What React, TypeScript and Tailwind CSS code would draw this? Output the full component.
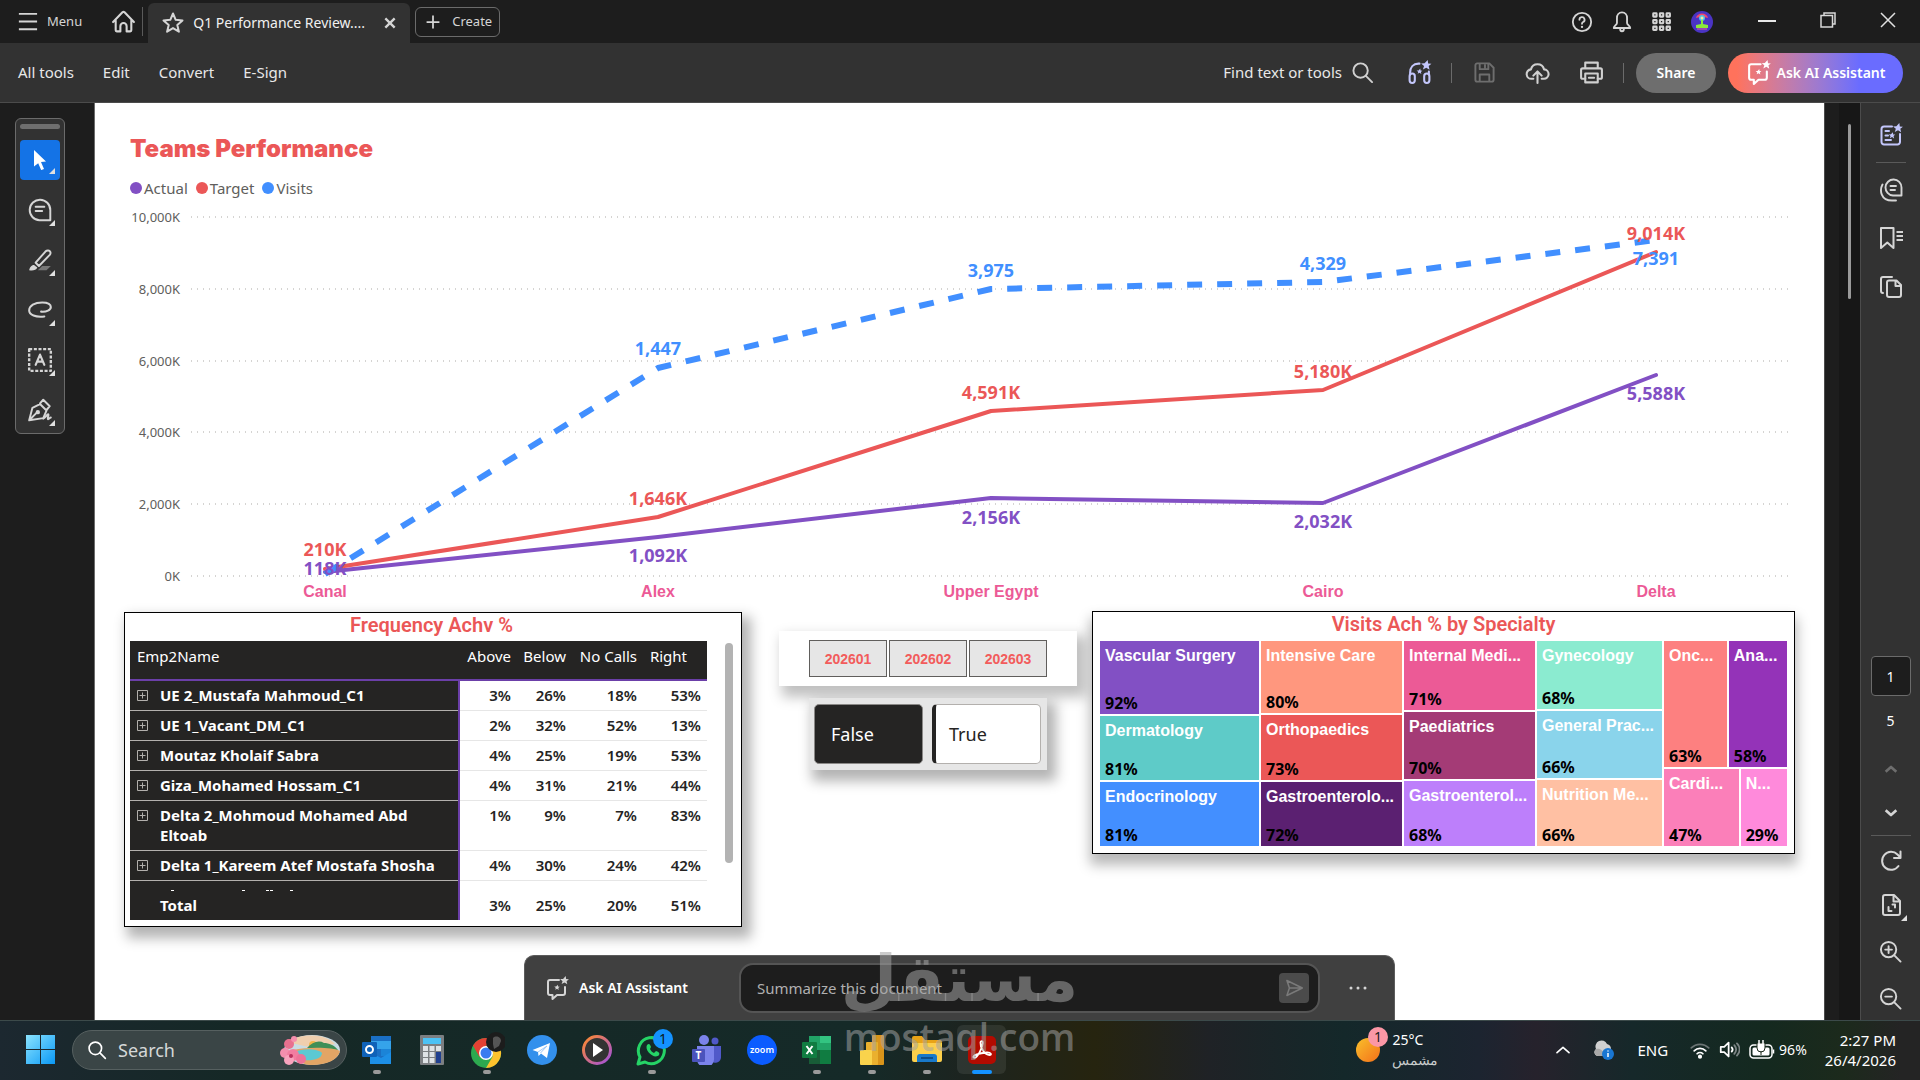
import React, {useState} from "react";

const toolbarLinks = ["All tools", "Edit", "Convert", "E-Sign"];

const regions = ["Canal", "Alex", "Upper Egypt", "Cairo", "Delta"];

const series = [
    {
        name: "Visits", color: "#418fff", width: 6, dash: "15 15",
        points: [374, 168, 89, 82, 40],
        labels: [null, "1,447", "3,975", "4,329", "7,391"],
        labelY: [0, 155, 77, 70, 65],
    },
    {
        name: "Target", color: "#eb5757", width: 4, dash: undefined,
        points: [369, 317, 211, 190, 52],
        labels: ["210K", "1,646K", "4,591K", "5,180K", "9,014K"],
        labelY: [356, 305, 199, 178, 40],
    },
    {
        name: "Actual", color: "#8250c4", width: 4, dash: undefined,
        points: [372, 337, 298, 303, 175],
        labels: ["118K", "1,092K", "2,156K", "2,032K", "5,588K"],
        labelY: [375, 362, 324, 328, 200],
    },
];

const employees = [
    {name: "UE 2_Mustafa Mahmoud_C1", values: ["3%", "26%", "18%", "53%"]},
    {name: "UE 1_Vacant_DM_C1", values: ["2%", "32%", "52%", "13%"]},
    {name: "Moutaz Kholaif Sabra", values: ["4%", "25%", "19%", "53%"]},
    {name: "Giza_Mohamed Hossam_C1", values: ["4%", "31%", "21%", "44%"]},
    {name: "Delta 2_Mohmoud Mohamed Abd Eltoab", values: ["1%", "9%", "7%", "83%"]},
    {name: "Delta 1_Kareem Atef Mostafa Shosha", values: ["4%", "30%", "24%", "42%"]},
];

const treemap = [
    {
        weight: 159, tiles: [
            {name: "Vascular Surgery", value: "92%", weight: 73, color: "bg-[#8250c4]"},
            {name: "Dermatology", value: "81%", weight: 64, color: "bg-[#5ecbc8]"},
            {name: "Endocrinology", value: "81%", weight: 64, color: "bg-[#438fff]"},
        ]
    },
    {
        weight: 141, tiles: [
            {name: "Intensive Care", value: "80%", weight: 72, color: "bg-[#ff977e]"},
            {name: "Orthopaedics", value: "73%", weight: 65, color: "bg-[#eb5757]"},
            {name: "Gastroenterolo...", value: "72%", weight: 64, color: "bg-[#5b2071]"},
        ]
    },
    {
        weight: 131, tiles: [
            {name: "Internal Medi...", value: "71%", weight: 69, color: "bg-[#ec5a96]"},
            {name: "Paediatrics", value: "70%", weight: 67, color: "bg-[#a43b76]"},
            {name: "Gastroenterol...", value: "68%", weight: 65, color: "bg-[#bd7ffb]"},
        ]
    },
    {
        weight: 125, tiles: [
            {name: "Gynecology", value: "68%", weight: 68, color: "bg-[#8bebd0]"},
            {name: "General Prac...", value: "66%", weight: 67, color: "bg-[#8ad4eb]"},
            {name: "Nutrition Me...", value: "66%", weight: 66, color: "bg-[#ffc0a3]"},
        ]
    },
];

const treemapEdge = [
    {
        weight: 126, tiles: [
            {name: "Onc...", value: "63%", weight: 63, color: "bg-[#fd8080]"},
            {name: "Ana...", value: "58%", weight: 58, color: "bg-[#9433b8]"},
        ]
    },
    {
        weight: 77, tiles: [
            {name: "Cardi...", value: "47%", weight: 76, color: "bg-[#fb7fb9]"},
            {name: "N...", value: "29%", weight: 45, color: "bg-[#ff8adb]"},
        ]
    },
];

const Icon = ({size = 24, className = "", children}) => (
    <svg width={size} height={size} viewBox="0 0 24 24" fill="none" stroke="currentColor" strokeWidth="2"
         strokeLinecap="round" strokeLinejoin="round" className={"shrink-0 " + className} aria-hidden="true">
        {children}
    </svg>
);

const Sparkle = ({x, y, s}) => (
    <path transform={`translate(${x} ${y}) scale(${s})`} stroke="none" fill="currentColor"
          d="M1.500 -5.500L2 -1.800L5.500 -1.500L2.600 0.800L3.500 4.800L0 2.600L-3.600 4.500L-2.400 0.800L-5.500 -1.800L-1.800 -2Z"/>
);

const AssistantIcon = ({size = 24}) => (
    <Icon size={size}>
        <path d="M14 4H5a2 2 0 0 0-2 2v11a2 2 0 0 0 2 2h2.500v4l4.500-4h6a2 2 0 0 0 2-2v-6"/>
        <Sparkle x={19.5} y={4.500} s={0.8}/>
        <Sparkle x={12} y={11.500} s={0.5}/>
    </Icon>
);

const SearchIcon = ({size = 24}) => (
    <Icon size={size}>
        <circle cx="10" cy="10" r="7.500"/>
        <path d="M15.500 15.500L22 22"/>
    </Icon>
);

const TitleBar = () => (
    <header className="flex h-[43px] items-center bg-[#1d1d1d] text-[#d5d5d5]">
        <button className="ml-[16px] flex items-center gap-2 text-[13px]">
            <Icon size={23}><path strokeLinecap="butt" d="M3 4h19M3 12h19M3 20h19"/></Icon>
            Menu
        </button>
        <button aria-label="Home" className="ml-[29px]">
            <Icon size={25}>
                <path d="M2 12.500L11 3.200a1.500 1.500 0 0 1 2 0L22 12.500M4.500 11v9.500a1 1 0 0 0 1 1H9v-5a3 3 0 0 1 6 0v5h3.500a1 1 0 0 0 1-1V11"/>
            </Icon>
        </button>
        <div className="ml-[6px] h-[29px] w-px bg-[#5a5a5a]"/>
        <div className="ml-[5px] mt-[3px] flex h-10 w-[262px] items-center rounded-t-md bg-[#323232] pl-[13px] pr-[13px]">
            <Icon size={24}>
                <path strokeWidth="2" d="M12 2.500l2.700 6.300 6.800.6-5.200 4.500 1.600 6.800L12 17.100l-5.900 3.600 1.600-6.800L2.500 9.400l6.800-.6z"/>
            </Icon>
            <span className="ml-2 flex-1 whitespace-nowrap text-sm text-[#f0f0f0]">Q1 Performance Review....</span>
            <button aria-label="Close tab">
                <Icon size={14}><path strokeWidth="4" strokeLinecap="butt" d="M4 4l16 16M20 4L4 20"/></Icon>
            </button>
        </div>
        <button className="ml-[5px] flex h-[30px] w-[85px] items-center gap-3 rounded-md border border-[#6b6b6b] px-[10px] text-[13px]">
            <Icon size={14}><path strokeWidth="3" strokeLinecap="butt" d="M12 1v22M1 12h22"/></Icon>
            Create
        </button>
        <div className="ml-auto flex items-center pr-6">
            <button aria-label="Help" className="mr-[18px]">
                <Icon size={22}>
                    <circle cx="12" cy="12" r="10"/>
                    <path d="M9.200 9.500a2.800 2.800 0 1 1 4 2.500c-1 .5-1.200 1-1.200 2"/>
                    <path strokeWidth="2.500" d="M12 17.300v.1"/>
                </Icon>
            </button>
            <button aria-label="Notifications" className="mr-[19px]">
                <Icon size={22}>
                    <path d="M12 1.500c-3.500 0-5.500 2.700-5.500 6v5.500c0 2-3.500 3.500-3.500 5.500h18c0-2-3.500-3.500-3.500-5.500V7.500c0-3.300-2-6-5.500-6z"/>
                    <path d="M10 19.500c0 3.500 4 3.500 4 0"/>
                </Icon>
            </button>
            <button aria-label="Apps" className="mr-[19px]">
                <Icon size={20}>
                    {[1.5, 9.5, 17.5].map(x => [1.5, 9.5, 17.5].map(y => (
                        <rect key={x + "-" + y} x={x} y={y} width="4" height="4" rx="0.500" strokeWidth="2.500"/>
                    )))}
                </Icon>
            </button>
            <button aria-label="Account" className="mr-[45px]">
                <svg width="22" height="22" viewBox="0 0 22 22">
                    <circle cx="11" cy="11" r="11" fill="#4b34c4"/>
                    <path d="M5 7c1-6 11-6 12 0l-4-1h-4z" fill="#f2496b"/>
                    <circle cx="11" cy="7" r="3" fill="#4fc3e8"/>
                    <circle cx="11" cy="7" r="1.500" fill="#f5e9a0"/>
                    <path d="M10 9h2v4l5 1v3H5v-3l5-1z" fill="#8bea3a"/>
                    <path d="M6 18h10" stroke="#e85aa0"/>
                </svg>
            </button>
            <button aria-label="Minimize" className="mr-[44px]">
                <svg width="18" height="18" viewBox="0 0 18 18"><path d="M0 8h18" stroke="#e8e8e8" strokeWidth="2"/></svg>
            </button>
            <button aria-label="Restore" className="mb-1 mr-[44px]">
                <svg width="16" height="16" viewBox="0 0 16 16" fill="none" stroke="#d8d8d8" strokeWidth="1.500">
                    <path d="M4 3V1h11v11h-2M1 3.500h11.500V15H1z"/>
                </svg>
            </button>
            <button aria-label="Close" className="mb-1">
                <svg width="16" height="16" viewBox="0 0 16 16" stroke="#e0e0e0" strokeWidth="1.500">
                    <path d="M1 1l14 14M15 1L1 15"/>
                </svg>
            </button>
        </div>
    </header>
);

const Toolbar = () => (
    <nav className="flex h-[60px] items-center border-b border-[#4b4b4b] bg-[#323232] px-[18px] text-sm text-[#e8e8e8]">
        <div className="flex gap-[29px] text-[15px]">
            {toolbarLinks.map(link => <a key={link} href="#">{link}</a>)}
        </div>
        <div className="ml-auto flex items-center text-[#d0d0d0]">
            <button className="flex items-center gap-[9px] whitespace-nowrap">
                <span className="text-[15px] text-[#e8e8e8]">Find text or tools</span>
                <SearchIcon size={23}/>
            </button>
            <button aria-label="Listen" className="ml-[33px] text-[#c3c6fb]">
                <Icon size={25}>
                    <path d="M3 13v-1c0-5 3-8.500 8-8.500h1M21 13v-2"/>
                    <rect x="2.500" y="13" width="5" height="9" rx="2.500"/>
                    <rect x="16.500" y="13" width="5" height="9" rx="2.500"/>
                    <Sparkle x={18.5} y={5} s={0.9}/>
                    <Sparkle x={12} y={11} s={0.5}/>
                </Icon>
            </button>
            <div className="ml-[19px] h-5 w-px bg-[#6b6b6b]"/>
            <button aria-label="Save" className="ml-[21px] text-[#6e6e6e]">
                <Icon size={23}>
                    <path d="M4 2.500h13l4.500 4.500v12.500a2 2 0 0 1-2 2H4.500a2 2 0 0 1-2-2v-15a2 2 0 0 1 2-2z"/>
                    <path d="M7 3v5.500h9V3M7 21v-7h10v7M12.500 4v3"/>
                </Icon>
            </button>
            <button aria-label="Upload" className="ml-[29px]">
                <Icon size={25}>
                    <path d="M8 18H6.500a4.500 4.500 0 0 1-.8-9A6.500 6.500 0 0 1 18.300 9a4.500 4.500 0 0 1-.3 9H16M12 22V11.500M8 15l4-4 4 4"/>
                </Icon>
            </button>
            <button aria-label="Print" className="ml-[29px]">
                <Icon size={25}>
                    <path d="M6 8V2.500h12V8M6 18H3.500a1.500 1.500 0 0 1-1.500-1.500v-7A1.500 1.500 0 0 1 3.500 8h17A1.500 1.500 0 0 1 22 9.500v7a1.500 1.500 0 0 1-1.500 1.500H18"/>
                    <path d="M6 13h12v8.500H6zM9.500 17h5"/>
                </Icon>
            </button>
            <div className="ml-[19px] h-5 w-px bg-[#6b6b6b]"/>
            <button className="ml-[12px] h-10 w-20 rounded-full bg-[#6e6e6e] font-semibold text-white">Share</button>
            <button className="ml-3 -mr-px flex h-10 w-[175px] items-center justify-center gap-[6px] whitespace-nowrap rounded-full bg-linear-to-r from-[#ff725c] from-5% to-[#6a6cff] to-75% font-semibold text-white">
                <AssistantIcon size={25}/>
                Ask AI Assistant
            </button>
        </div>
    </nav>
);

const Corner = () => (
    <svg width="6" height="6" viewBox="0 0 6 6" className="absolute bottom-[6px] right-[5px]">
        <path d="M6 0v6H0z" fill="#e0e0e0"/>
    </svg>
);

const tools = [
    {
        label: "Comment",
        icon: <Icon size={26}>
            <path d="M21.500 21.500H11.500a9.500 9.500 0 1 1 10-9.500z" strokeWidth="1.800"/>
            <path d="M8 9h8M8 13h6" strokeWidth="1.800"/>
        </Icon>
    },
    {
        label: "Highlight",
        icon: <Icon size={26}>
            <path d="M8 14.500L17 4.200c1.500-1.500 3.800-1.200 4.500.3.400 1 .2 2-.5 2.800L11 17.500z" strokeWidth="1.800"/>
            <path d="M6.500 16.500l3 2.500c-1 3-5 3-7.500 2.500.2-2.500 2-5 4.500-5z" fill="currentColor" stroke="none"/>
            <path d="M14 17.500h8l-4 4h-8z" fill="#777" stroke="none"/>
        </Icon>
    },
    {
        label: "Draw",
        icon: <Icon size={26}>
            <path d="M13 13.500c5 .5 9-1.500 9-4.300 0-2.700-3-4.200-8-4.200C7 5 2 8 2 12.500c0 4 6 6.500 14 5.500" strokeWidth="1.900"/>
        </Icon>
    },
    {
        label: "Add text",
        icon: <Icon size={26}>
            <rect x="2" y="2" width="20" height="20" strokeWidth="2.200" strokeDasharray="2.800 1.500" strokeLinecap="butt"/>
            <path d="M8 16.500L12 7l4 9.500M9.500 13.500h5" strokeWidth="2"/>
        </Icon>
    },
    {
        label: "Sign",
        icon: <Icon size={26}>
            <path d="M2 21.500l3-11.500 7-3.500 6 6-3 7-13 2zM12 6l3-3.500 6 6-3 3.500M2.500 21l7-7" strokeWidth="1.800"/>
            <circle cx="10" cy="14" r="1" fill="currentColor"/>
            <path d="M15 20c2-1 3.500-4 4.500-4s-1 4.500 0 4.500 1.500-1.500 2.500-1.500" strokeWidth="1.800"/>
        </Icon>
    },
];

const QuickTools = () => (
    <aside className="w-[95px] shrink-0 border-r border-[#6b6b6b] bg-[#1d1d1d] pl-[15px] pt-[15px]">
        <div className="flex w-[50px] flex-col items-center rounded-md border border-[#6b6b6b] bg-[#323232] pb-px pt-[5px] text-[#d5d5d5]">
            <div className="mb-[11px] h-[5px] w-10 rounded-sm bg-[#6e6e6e]"/>
            <button aria-label="Select" className="relative mb-[7px] flex h-10 w-10 items-center justify-center rounded bg-[#1473e6] text-white">
                <svg width="12" height="20" viewBox="0 0 12 20" fill="currentColor">
                    <path d="M0 0l12 11.500-5 .5 3 7-2.800 1.100-3-6.800L0 16.500z"/>
                </svg>
                <Corner/>
            </button>
            {tools.map(tool => (
                <button key={tool.label} aria-label={tool.label} className="relative mb-[5px] flex h-[45px] w-10 items-center justify-center last:mb-0">
                    {tool.icon}
                    <Corner/>
                </button>
            ))}
        </div>
    </aside>
);

const LineChart = () => (
    <svg viewBox="0 0 1729 408" className="block w-full" role="img" aria-label="Teams Performance">
        {[0, 1, 2, 3, 4, 5].map(i => (
            <g key={i}>
                <line x1="96" x2="1693" y1={17 + Math.round(i * 71.8)} y2={17 + Math.round(i * 71.8)}
                      stroke="#c8c6c4" strokeDasharray="1 5" strokeWidth="1.500"/>
                <text x="85" y={22 + Math.round(i * 71.8)} textAnchor="end" fontSize="13" fill="#605e5c">
                    {i === 5 ? "0K" : `${10 - i * 2},000K`}
                </text>
            </g>
        ))}
        {[...series].reverse().map(s => (
            <polyline key={s.name} fill="none" stroke={s.color} strokeWidth={s.width} strokeDasharray={s.dash}
                      strokeLinejoin="round" strokeLinecap={s.dash ? "butt" : "round"}
                      points={s.points.map((y, i) => `${230 + Math.round(i * 332.75)},${y}`).join(" ")}/>
        ))}
        {series.map(s => s.labels.map((label, i) => label && (
            <text key={s.name + i} x={230 + Math.round(i * 332.75)} y={s.labelY[i]} textAnchor="middle"
                  fontSize="18" fontWeight="700" fill={s.color}>{label}</text>
        )))}
        {regions.map((region, i) => (
            <text key={region} x={230 + Math.round(i * 332.75)} y="397" textAnchor="middle" fontSize="16"
                  fontWeight="700" fill="#ec5a96" fontFamily="Liberation Sans, sans-serif">{region}</text>
        ))}
    </svg>
);

const FrequencyTable = () => (
    <section className="mt-px w-[618px] border border-black bg-white pb-[6px] pl-[5px] pr-2 shadow-[6px_8px_12px_3px_rgba(0,0,0,0.3)]">
        <h2 className="mb-[4px] text-center font-['Roboto'] text-xl leading-6 font-semibold text-[#eb5757]">Frequency Achv %</h2>
        <div className="flex justify-between">
            <table className="w-[577px] table-fixed border-collapse text-[15px] leading-5 text-[#252423]">
                <colgroup>
                    <col/>
                    <col className="w-[58px]"/>
                    <col className="w-[55px]"/>
                    <col className="w-[71px]"/>
                    <col className="w-[64px]"/>
                </colgroup>
                <thead>
                <tr className="h-[39px] border-b-2 border-[#6b3fa8] bg-[#252423] align-top text-white">
                    <th className="pl-[7px] pt-[5px] text-left font-normal">Emp2Name</th>
                    <th className="pr-[6px] pt-[5px] text-right font-normal">Above</th>
                    <th className="pr-[6px] pt-[5px] text-right font-normal">Below</th>
                    <th className="whitespace-nowrap pr-[6px] pt-[5px] text-right font-normal">No Calls</th>
                    <th className="pr-[20px] pt-[5px] text-right font-normal">Right</th>
                </tr>
                </thead>
                <tbody>
                {employees.map(row => (
                    <tr key={row.name} className="border-b border-[#e6e6e6] align-top font-semibold">
                        <th className="border-b border-r-2 border-b-[#b3b0ad] border-r-[#6b3fa8] bg-[#252423] pb-[5px] pl-[7px] pr-[14px] pt-1 text-left font-bold text-white">
                            <div className="flex gap-3">
                                <button aria-label="Expand" className="h-5">
                                    <svg width="11" height="11" viewBox="0 0 11 11" fill="none" stroke="#b3b0ad">
                                        <path d="M.5.5h10v10H.5zM5.500 2.500v6M2.500 5.500h6"/>
                                    </svg>
                                </button>
                                <span>{row.name}</span>
                            </div>
                        </th>
                        {row.values.map((value, i) => (
                            <td key={i} className="pb-[5px] pr-[6px] pt-1 text-right">{value}</td>
                        ))}
                    </tr>
                ))}
                <tr>
                    <td className="h-[10px] border-r-2 border-[#6b3fa8] bg-[#252423] p-0 align-bottom">
                        <svg width="170" height="1" viewBox="0 0 170 1" className="block">
                            <path d="M41 .5h3M112 .5h3M136 .5h3M140 .5h3M160 .5h3" stroke="#fff"/>
                        </svg>
                    </td>
                    <td colSpan={4} className="p-0"/>
                </tr>
                </tbody>
                <tfoot>
                <tr className="align-top font-semibold">
                    <th className="border-r-2 border-[#6b3fa8] bg-[#252423] pb-[5px] pl-[30px] pt-1 text-left font-bold text-white">Total</th>
                    {["3%", "25%", "20%", "51%"].map(value => (
                        <td key={value} className="pb-[5px] pr-[6px] pt-1 text-right">{value}</td>
                    ))}
                </tr>
                </tfoot>
            </table>
            <div className="mt-[2px] h-[220px] w-2 rounded-full bg-[#b3b3b3]"/>
        </div>
    </section>
);

const Slicers = () => {
    const [month, setMonth] = useState("");
    const [flag, setFlag] = useState("False");

    return (
        <div className="ml-[37px] flex w-[298px] flex-col items-center gap-3 pt-[20px]">
            <div className="flex h-[55px] w-full items-start justify-center gap-[2px] bg-white pt-[9px] shadow-[6px_8px_12px_3px_rgba(0,0,0,0.25)]">
                {["202601", "202602", "202603"].map(m => (
                    <button key={m} aria-pressed={month === m} onClick={() => setMonth(m)}
                            className="h-[37px] w-[78px] border border-[#605e5c] bg-[#e6e6e6] font-['Liberation_Sans'] text-sm font-bold text-[#f25c5c]">
                        {m}
                    </button>
                ))}
            </div>
            <div className="flex h-[72px] w-[238px] gap-[9px] bg-[#e6e6e6] px-[5px] py-[6px] text-lg shadow-[6px_8px_12px_3px_rgba(0,0,0,0.3)]">
                {["False", "True"].map(f => (
                    <button key={f} aria-pressed={flag === f} onClick={() => setFlag(f)}
                            className={flag === f
                                ? "h-[60px] w-[109px] rounded-[5px] border border-[#8a8886] bg-[#252423] pl-4 text-left text-white"
                                : "h-[60px] w-[109px] rounded-[5px] border border-l-4 border-[#b3b0ad] border-l-[#252423] bg-white pl-[13px] text-left text-[#252423]"}>
                        {f}
                    </button>
                ))}
            </div>
        </div>
    );
};

const Tile = ({tile}) => (
    <div className={"flex min-h-0 min-w-0 basis-0 flex-col justify-between overflow-hidden pl-[5px] pt-[5px] " + tile.color}
         style={{flexGrow: tile.weight}}>
        <span className="whitespace-nowrap font-['Liberation_Sans'] text-base leading-5 font-bold text-white">{tile.name}</span>
        <span className="text-base leading-[22px] font-bold text-black">{tile.value}</span>
    </div>
);

const SpecialtyTreemap = () => (
    <section className="ml-auto w-[703px] border border-black bg-white px-[7px] pb-[7px] shadow-[0_9px_12px_2px_rgba(0,0,0,0.28)]">
        <h2 className="mb-[5px] text-center font-['Roboto'] text-xl leading-6 font-semibold text-[#eb5757]">Visits Ach % by Specialty</h2>
        <div className="flex h-[205px] gap-[2px]">
            {treemap.map((column, i) => (
                <div key={i} className="flex min-w-0 basis-0 flex-col gap-[2px]" style={{flexGrow: column.weight}}>
                    {column.tiles.map(tile => <Tile key={tile.name} tile={tile}/>)}
                </div>
            ))}
            <div className="flex min-w-0 basis-0 flex-col gap-[2px]" style={{flexGrow: 123}}>
                {treemapEdge.map((row, i) => (
                    <div key={i} className="flex min-h-0 basis-0 gap-[2px]" style={{flexGrow: row.weight}}>
                        {row.tiles.map(tile => <Tile key={tile.name} tile={tile}/>)}
                    </div>
                ))}
            </div>
        </div>
    </section>
);

const AssistantBar = () => (
    <form className="absolute bottom-0 left-[429px] flex h-[65px] w-[871px] items-center rounded-t-[10px] border border-b-0 border-[#5c5c5c] bg-[#404040] pl-[20px] text-[#d5d5d5]">
        <AssistantIcon size={24}/>
        <label htmlFor="prompt" className="ml-[10px] w-[160px] whitespace-nowrap text-sm font-semibold text-white">Ask AI Assistant</label>
        <div className="flex h-[50px] w-[581px] items-center rounded-[14px] border-2 border-[#555] bg-[#1d1d1d] pl-4 pr-[9px]">
            <input id="prompt" type="text" placeholder="Summarize this document"
                   className="min-w-0 flex-1 bg-transparent text-[15px] outline-none placeholder:text-[#b0b0b0]"/>
            <button type="button" aria-label="Send" className="flex h-[30px] w-[30px] items-center justify-center rounded bg-[#4b4b4b] text-[#7a7a7a]">
                <Icon size={20}><path strokeWidth="1.800" d="M3.500 3L22 12 3.500 21l3-9zM6.500 12H21"/></Icon>
            </button>
        </div>
        <button type="button" aria-label="More options" className="ml-[28px]">
            <svg width="20" height="4" viewBox="0 0 20 4" fill="#d5d5d5">
                <circle cx="3" cy="2" r="1.500"/>
                <circle cx="10" cy="2" r="1.500"/>
                <circle cx="17" cy="2" r="1.500"/>
            </svg>
        </button>
    </form>
);

const SideRail = () => (
    <aside className="flex w-[60px] shrink-0 flex-col items-center border-l border-[#4b4b4b] bg-[#323232] pt-[20px] text-[#d5d5d5]">
        <button aria-label="Generative summary" className="text-[#c3c6fb]">
            <Icon size={24}>
                <path d="M13 3.500H5a2.500 2.500 0 0 0-2.500 2.500v13A2.500 2.500 0 0 0 5 21.500h13.500A2.500 2.500 0 0 0 21 19v-8M6.500 8H10M6.500 12.500h2.500M6.500 17H12"/>
                <Sparkle x={19} y={5} s={0.9}/>
                <Sparkle x={13} y={12.500} s={0.6}/>
            </Icon>
        </button>
        <div className="mt-[15px] h-px w-[30px] bg-[#5a5a5a]"/>
        <button aria-label="Comments" className="mt-[15px]">
            <Icon size={24}>
                <path d="M22.500 17.500H14a8 8 0 1 1 8.500-8zM11.500 8h5.500M11.500 12h4.500M3.500 6.500C.5 12 1.500 22.500 13 22.500h4" strokeWidth="1.900"/>
            </Icon>
        </button>
        <button aria-label="Bookmarks" className="mt-[24px]">
            <Icon size={24}>
                <path d="M2 2h12.500v20L8.300 16.500 2 22z"/>
                <path strokeLinecap="butt" d="M17.500 6H24M17.500 10H24M17.500 14H24"/>
            </Icon>
        </button>
        <button aria-label="Pages" className="mt-[25px]">
            <Icon size={24}>
                <path d="M10 5.500h7.500L22 10v10a2 2 0 0 1-2 2H10a2 2 0 0 1-2-2V7.500a2 2 0 0 1 2-2zM16.500 6v5H22M4 18a2 2 0 0 1-2-2V4a2 2 0 0 1 2-2h9"/>
            </Icon>
        </button>
        <div className="mt-auto flex flex-col items-center">
            <input aria-label="Page number" defaultValue="1" className="h-10 w-10 rounded border border-[#6b6b6b] bg-[#1d1d1d] text-center text-sm text-white outline-none"/>
            <span className="mt-[15px] text-sm leading-5 text-white">5</span>
            <button aria-label="Previous page" className="mt-[30px] text-[#6e6e6e]">
                <Icon size={16}><path strokeWidth="4" strokeLinecap="butt" d="M4 16l8-7 8 7"/></Icon>
            </button>
            <button aria-label="Next page" className="mt-[28px]">
                <Icon size={16}><path strokeWidth="4" strokeLinecap="butt" d="M4 8l8 7 8-7"/></Icon>
            </button>
            <div className="mt-[14px] h-px w-10 bg-[#5a5a5a]"/>
            <button aria-label="Rotate" className="mt-[13px]">
                <Icon size={24}><path d="M19.500 17a9 9 0 1 1-1-11.500L21 8M21.500 2.500V9H15"/></Icon>
            </button>
            <button aria-label="Fit page" className="relative mt-[20px]">
                <Icon size={24}>
                    <path d="M6 2h9l6 6v12a2 2 0 0 1-2 2H6a2 2 0 0 1-2-2V4a2 2 0 0 1 2-2zM14.500 2.500V8.500H21M9.500 14v4h3M13.500 11.500H16v3"/>
                </Icon>
                <svg width="6" height="6" viewBox="0 0 6 6" className="absolute -bottom-[4px] -right-[4px]">
                    <path d="M6 0v6H0z" fill="#e0e0e0"/>
                </svg>
            </button>
            <button aria-label="Zoom in" className="mt-[23px]">
                <Icon size={23}><circle cx="10" cy="10" r="8"/><path d="M16 16l6.500 6.500M6.500 10h7M10 6.500v7"/></Icon>
            </button>
            <button aria-label="Zoom out" className="mb-[10px] mt-[24px]">
                <Icon size={23}><circle cx="10" cy="10" r="8"/><path d="M16 16l6.500 6.500M6.500 10h7"/></Icon>
            </button>
        </div>
    </aside>
);

const apps = [
    {
        name: "Outlook", running: true,
        icon: <svg width="30" height="30" viewBox="0 0 30 30">
            <path d="M9 1h20v28H9z" fill="#1a6fc4"/>
            <path d="M9 6h10v8H9zM19 6h10v8H19z" fill="#35a3ea"/>
            <path d="M19 14h10v7H19z" fill="#1b84d8"/>
            <path d="M8 17l11 6 10-6v12H8z" fill="#1d8fe6"/>
            <rect x="0" y="7" width="15" height="15" rx="1" fill="#0f62b8"/>
            <circle cx="7.500" cy="14.500" r="3.500" fill="none" stroke="#fff" strokeWidth="2"/>
        </svg>
    },
    {
        name: "Calculator", running: false,
        icon: <svg width="24" height="30" viewBox="0 0 24 30">
            <rect width="24" height="30" rx="1" fill="#7c7f82"/>
            <path d="M3 3h18v6H3z" fill="#4cc2f5"/>
            <path d="M3 11h5v5H3zM9.500 11h5v5h-5zM16 11h5v5h-5zM3 17h5v5H3zM9.500 17h5v5h-5zM3 23h5v5H3zM9.500 23h5v5h-5z" fill="#dfe3e6"/>
            <path d="M16 17h5v11h-5z" fill="#20408f"/>
        </svg>
    },
    {
        name: "Chrome", running: true,
        icon: <svg width="36" height="38" viewBox="0 0 36 38">
            <circle cx="17" cy="22" r="15" fill="#2da94f"/>
            <path d="M17 7a15 15 0 0 1 13 7.500H17L10.500 26 4 14.500A15 15 0 0 1 17 7z" fill="#e34133"/>
            <path d="M30 14.500A15 15 0 0 1 17 37l6.500-11.200V14.500z" fill="#fdc32d"/>
            <circle cx="17" cy="22" r="7" fill="#fff"/>
            <circle cx="17" cy="22" r="5.500" fill="#3a7cf0"/>
            <circle cx="27" cy="11" r="10" fill="#1c1c1c"/>
            <path d="M24 7c3-3 8-1 8 3l-2 5-5 3-1-5z" fill="#555"/>
        </svg>
    },
    {
        name: "Telegram", running: false,
        icon: <svg width="30" height="30" viewBox="0 0 30 30">
            <circle cx="15" cy="15" r="15" fill="#3390ec"/>
            <path d="M5.500 15L23 8l-3 15-6-4.500-2.500 2.500-.5-4z" fill="#fff"/>
            <path d="M11 17l9-6-6.500 7" fill="none" stroke="#9cc8f7"/>
        </svg>
    },
    {
        name: "Media Player", running: false,
        icon: <svg width="30" height="30" viewBox="0 0 30 30">
            <defs>
                <linearGradient id="ring" x1="0" y1="0" x2="1" y2="1">
                    <stop offset="0" stopColor="#ff8a2b"/>
                    <stop offset="1" stopColor="#a050e0"/>
                </linearGradient>
            </defs>
            <circle cx="15" cy="15" r="13.500" fill="#333" stroke="url(#ring)" strokeWidth="3"/>
            <path d="M11 8l10 7-10 7z" fill="#fff"/>
        </svg>
    },
    {
        name: "WhatsApp", running: true,
        icon: <svg width="44" height="44" viewBox="0 0 44 44">
            <path d="M8 36l2-7a13 13 0 1 1 5 5z" fill="none" stroke="#25d366" strokeWidth="3" strokeLinejoin="round"/>
            <path d="M17 17c2-2 3-1 4 2l-1 2c1 2 2 3 4 4l2-2c3 1 4 2 3 4-4 5-15-4-12-10z" fill="#25d366"/>
            <circle cx="33" cy="11" r="10" fill="#1492ff"/>
            <text x="33" y="16" fontSize="14" textAnchor="middle" fill="#0c1a22">1</text>
        </svg>
    },
    {
        name: "Teams", running: false,
        icon: <svg width="30" height="30" viewBox="0 0 30 30">
            <circle cx="12" cy="5" r="5" fill="#7b83eb"/>
            <circle cx="23" cy="6" r="3.500" fill="#5059c9"/>
            <path d="M18 11h11v10a6 6 0 0 1-11 4z" fill="#5059c9"/>
            <path d="M5 11h17v12a8 8 0 0 1-17 2z" fill="#7b83eb"/>
            <rect x="0" y="14" width="13" height="13" rx="1" fill="#4b53bc"/>
            <text x="6.500" y="24" fontSize="10" fontWeight="700" textAnchor="middle" fill="#fff">T</text>
        </svg>
    },
    {
        name: "Zoom", running: false,
        icon: <svg width="30" height="30" viewBox="0 0 30 30">
            <circle cx="15" cy="15" r="15" fill="#0b5cff"/>
            <text x="15" y="18" fontSize="9" fontWeight="600" textAnchor="middle" fill="#fff">zoom</text>
        </svg>
    },
    {
        name: "Excel", running: true,
        icon: <svg width="30" height="28" viewBox="0 0 30 28">
            <path d="M7 0h11v14H7z" fill="#21a366"/>
            <path d="M18 0h11v7H18z" fill="#33c481"/>
            <path d="M18 7h11v7H18z" fill="#21a366"/>
            <path d="M7 14h11v14H7z" fill="#185c37"/>
            <path d="M18 14h11v14H18z" fill="#107c41"/>
            <rect x="0" y="6" width="15" height="16" rx="1" fill="#107c41"/>
            <path d="M4.500 10l6 8M10.500 10l-6 8" stroke="#fff" strokeWidth="2"/>
        </svg>
    },
    {
        name: "Power BI", running: true,
        icon: <svg width="24" height="30" viewBox="0 0 24 30">
            <rect x="12" y="0" width="12" height="30" rx="1" fill="#d9941a"/>
            <rect x="6" y="7" width="12" height="23" rx="1" fill="#eab02e"/>
            <rect x="0" y="15" width="12" height="15" rx="1" fill="#f9d34c"/>
        </svg>
    },
    {
        name: "File Explorer", running: true,
        icon: <svg width="30" height="27" viewBox="0 0 30 27">
            <path d="M0 2a2 2 0 0 1 2-2h8l3 4h15a2 2 0 0 1 2 2v6H0z" fill="#e8a317"/>
            <path d="M0 7h30v17a2 2 0 0 1-2 2H2a2 2 0 0 1-2-2z" fill="#fccf4b"/>
            <path d="M5 26v-5a3 3 0 0 1 3-3h14a3 3 0 0 1 3 3v5z" fill="#1979ca"/>
            <path d="M9 22h12" stroke="#0d4f8c" strokeWidth="2"/>
        </svg>
    },
    {
        name: "Acrobat", running: true, active: true,
        icon: <svg width="28" height="28" viewBox="0 0 28 28">
            <rect width="28" height="28" rx="5" fill="#b30b00"/>
            <path d="M5.500 21.500c-1.500-2 6-4.500 13-5 5-.3 5.500 2.500 3 2.500-4.500 0-9.500-7-9-12.500.2-2 2.500-2 2.300.5-.4 5-5.300 14.500-8 14.800z" fill="none" stroke="#fff" strokeWidth="1.800"/>
        </svg>
    },
];

const Taskbar = () => (
    <footer className="flex h-[60px] shrink-0 items-center border-t border-[#3c4a4a] bg-[linear-gradient(90deg,#1c2830_0%,#152826_12%,#152a28_45%,#1c2420_50%,#26240f_57%,#1f2226_63%,#14282a_70%,#1c2430_77%,#26222c_80%,#16282a_85%,#14291f_92%,#1c2a1c_96%,#242424_99%)] pb-[2px] text-white">
        <button aria-label="Start" className="ml-[26px]">
            <svg width="29" height="29" viewBox="0 0 29 29">
                <defs>
                    <linearGradient id="win" x1="0" y1="0" x2="1" y2="1">
                        <stop offset="0" stopColor="#8be4ff"/>
                        <stop offset="1" stopColor="#0a98f5"/>
                    </linearGradient>
                </defs>
                <path d="M0 0h14v14H0zM15 0h14v14H15zM0 15h14v14H0zM15 15h14v14H15z" fill="url(#win)"/>
            </svg>
        </button>
        <label className="ml-[17px] flex h-10 w-[275px] items-center rounded-full border border-[#566060] bg-[#3a4546] pl-[14px] pr-[5px]">
            <SearchIcon size={20}/>
            <input type="text" aria-label="Search" placeholder="Search" className="ml-[11px] w-[150px] min-w-0 flex-1 bg-transparent text-lg outline-none placeholder:text-[#d5d8d8]"/>
            <svg width="62" height="32" viewBox="0 0 62 32">
                <ellipse cx="33" cy="16" rx="28" ry="15" fill="#c9dce4"/>
                <path d="M8 8c10-8 38-10 48 2l-22 4z" fill="#f0cfae"/>
                <circle cx="34" cy="11" r="4" fill="#f3b54a"/>
                <path d="M28 14c5-6 12-8 17-5 5 0 10 2 14 7z" fill="#3f8f57"/>
                <path d="M14 16c14-3 40-3 47 1-2 9-14 14-28 14-10 0-20-6-19-15z" fill="#e3a565"/>
                <path d="M14 19c8-5 24-5 29 0 0 6-10 8-18 7z" fill="#5cc9d2"/>
                <circle cx="10" cy="10" r="5" fill="#e8708f"/>
                <circle cx="15" cy="5" r="3" fill="#f58fae"/>
                <circle cx="6" cy="19" r="5" fill="#f58fae"/>
                <circle cx="14" cy="21" r="6" fill="#f27da0"/>
                <circle cx="10" cy="26" r="5" fill="#f9a3bd"/>
                <circle cx="22" cy="25" r="5" fill="#ee7298"/>
                <circle cx="12" cy="22" r="2" fill="#b8305c"/>
            </svg>
        </label>
        <nav className="ml-[2px] flex h-full items-center">
            {apps.map(app => (
                <button key={app.name} aria-label={app.name} className="relative flex h-full w-[55px] items-center justify-center">
                    {app.active && <span className="absolute inset-x-[3px] inset-y-[4px] rounded-md bg-white/8"/>}
                    <span className="relative">{app.icon}</span>
                    {app.running && (
                        <span className={app.active
                            ? "absolute bottom-[4px] h-[4px] w-5 rounded-full bg-[#1492ff]"
                            : "absolute bottom-[4px] h-[4px] w-2 rounded-full bg-[#9a9a9a]"}/>
                    )}
                </button>
            ))}
        </nav>
        <div className="ml-auto flex items-center pr-6 text-[15px] leading-5">
            <svg width="34" height="38" viewBox="0 0 34 38" className="mb-[10px]">
                <defs>
                    <linearGradient id="sun" x1="0" y1="0" x2="1" y2="1">
                        <stop offset="0" stopColor="#f9c02b"/>
                        <stop offset="1" stopColor="#f4701a"/>
                    </linearGradient>
                </defs>
                <circle cx="13" cy="24" r="12" fill="url(#sun)"/>
                <circle cx="23" cy="11" r="10" fill="#fb97a6"/>
                <text x="23" y="16" fontSize="14" textAnchor="middle" fill="#1c1c1c">1</text>
            </svg>
            <div className="ml-[3px] flex w-[163px] flex-col text-sm">
                <span>25°C</span>
                <span dir="rtl" className="self-start text-left text-[#c8cccc]" lang="ar">مشمس</span>
            </div>
            <button aria-label="Show hidden icons">
                <Icon size={16}><path strokeWidth="2.500" d="M3 16l9-8 9 8"/></Icon>
            </button>
            <svg width="22" height="22" viewBox="0 0 22 22" className="ml-[22px]">
                <path d="M4 17a4 4 0 0 1-1-7A6 6 0 0 1 14 5c4 1 5 5 3 8l-5 4z" fill="#d0d0d0"/>
                <path d="M3 10c4-1 7 1 9 7H5c-3 0-5-4-2-7z" fill="#a8a8a8"/>
                <circle cx="15" cy="15" r="6" fill="#1976d2"/>
                <path d="M15 14v4M15 11.500v1" stroke="#fff" strokeWidth="1.500"/>
            </svg>
            <span className="ml-[22px] text-[15px]">ENG</span>
            <Icon size={20} className="ml-[22px]">
                <path stroke="#6c7575" d="M1.500 9.500a15 15 0 0 1 21 0"/>
                <path d="M5 13a10 10 0 0 1 14 0M8.500 16.500a5 5 0 0 1 7 0"/>
                <circle cx="12" cy="20" r="1.500" fill="currentColor"/>
            </Icon>
            <Icon size={21} className="ml-[9px]">
                <path d="M2 9v6h4l5 5V4L6 9zM14.500 9.500c1.300 1.500 1.300 3.500 0 5"/>
                <path stroke="#7c8585" d="M17.500 7c2.500 3 2.500 7 0 10M20.500 5c4 4 4 10 0 14"/>
            </Icon>
            <svg width="26" height="22" viewBox="0 0 26 22" className="ml-[9px]">
                <rect x="1" y="6" width="22" height="13" rx="3.500" fill="none" stroke="#fff" strokeWidth="1.500"/>
                <rect x="3.500" y="8.500" width="17" height="8" rx="1.500" fill="#fff"/>
                <path d="M24.500 10.500v4" stroke="#fff" strokeWidth="1.500"/>
                <path d="M8 4h8v5a4 4 0 0 1-8 0zM12 12v4" fill="#fff" stroke="#1c2a1c"/>
                <path d="M10 1v4M14 1v4" stroke="#fff" strokeWidth="1.500"/>
            </svg>
            <span className="ml-1 text-sm">96%</span>
            <div className="ml-[18px] flex flex-col items-end text-[15px]">
                <span>2:27 PM</span>
                <span>26/4/2026</span>
            </div>
        </div>
    </footer>
);

const App = () => (
    <div className="relative flex h-screen flex-col overflow-hidden bg-[#1d1d1d] font-['Noto_Sans',sans-serif]">
        <TitleBar/>
        <Toolbar/>
        <div className="flex min-h-0 flex-1">
            <QuickTools/>
            <main className="relative min-w-0 flex-1 overflow-hidden bg-white">
                <div className="px-[35px] pt-[33px]">
                    <h1 className="font-['Inter'] text-2xl leading-[26px] font-black text-[#eb5757]">Teams Performance</h1>
                    <div className="mt-[15px] flex gap-2 text-[15px] leading-[22px] text-[#605e5c]">
                        {[...series].reverse().map(s => (
                            <span key={s.name} className="flex items-center gap-[2px]">
                                <svg width="12" height="12" viewBox="0 0 12 12"><circle cx="6" cy="6" r="6" fill={s.color}/></svg>
                                {s.name}
                            </span>
                        ))}
                    </div>
                </div>
                <div className="pt-px">
                    <LineChart/>
                </div>
                <div className="mt-[3px] flex items-start px-[29px]">
                    <FrequencyTable/>
                    <Slicers/>
                    <SpecialtyTreemap/>
                </div>
                <AssistantBar/>
            </main>
            <div className="flex w-[36px] shrink-0 border-l border-[#4b4b4b]">
                <div className="ml-[14px] flex flex-1 justify-center bg-[#171717] pt-[21px]">
                    <div className="h-[175px] w-[3px] rounded-full bg-[#9a9a9a]"/>
                </div>
            </div>
            <SideRail/>
        </div>
        <Taskbar/>
        <div className="pointer-events-none absolute bottom-0 left-[845px] flex h-[136px] w-[229px] flex-col items-center text-[#a3a3a3]/55">
            <span dir="rtl" lang="ar" className="whitespace-nowrap font-['DejaVu_Sans'] text-[65px] leading-[70px] font-bold">مستقل</span>
            <span className="font-['Open_Sans'] text-[37px] leading-[46px] font-semibold">mostaql.com</span>
        </div>
    </div>
);

export default App;
